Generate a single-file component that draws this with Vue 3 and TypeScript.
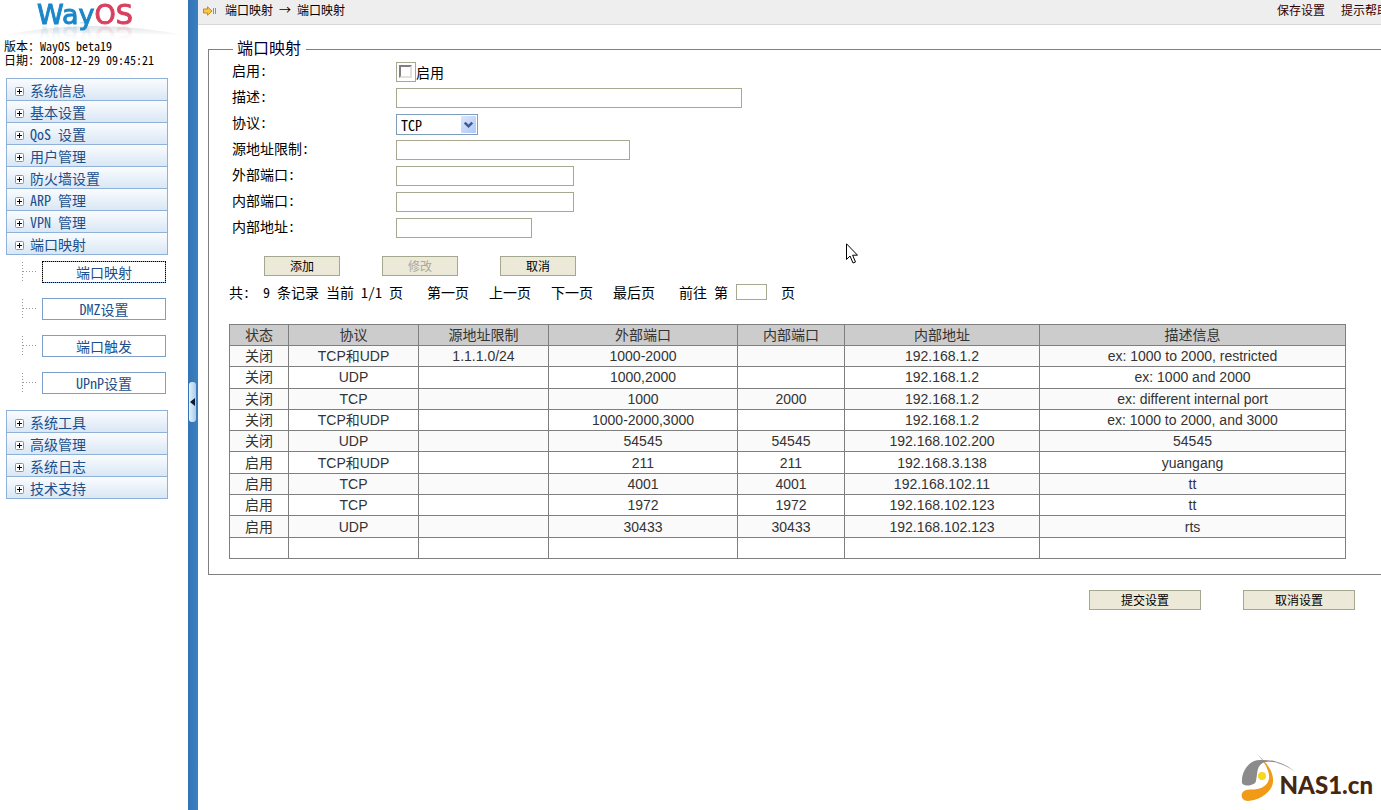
<script setup lang="ts">
import { reactive, ref } from 'vue'

interface Rule {
  state: string
  proto: string
  source: string
  outer: string
  inner: string
  address: string
  note: string
}

const upperMenu = ['系统信息', '基本设置', 'QoS 设置', '用户管理', '防火墙设置', 'ARP 管理', 'VPN 管理', '端口映射']
const subMenu = ['端口映射', 'DMZ设置', '端口触发', 'UPnP设置']
const lowerMenu = ['系统工具', '高级管理', '系统日志', '技术支持']
const activeSub = ref('端口映射')

const form = reactive({ enabled: false, note: '', proto: 'TCP', source: '', outer: '', inner: '', address: '' })
const gotoPage = ref('')

const columns = ['状态', '协议', '源地址限制', '外部端口', '内部端口', '内部地址', '描述信息']
const rules: Rule[] = [
  { state: '关闭', proto: 'TCP和UDP', source: '1.1.1.0/24', outer: '1000-2000', inner: '', address: '192.168.1.2', note: 'ex: 1000 to 2000, restricted' },
  { state: '关闭', proto: 'UDP', source: '', outer: '1000,2000', inner: '', address: '192.168.1.2', note: 'ex: 1000 and 2000' },
  { state: '关闭', proto: 'TCP', source: '', outer: '1000', inner: '2000', address: '192.168.1.2', note: 'ex: different internal port' },
  { state: '关闭', proto: 'TCP和UDP', source: '', outer: '1000-2000,3000', inner: '', address: '192.168.1.2', note: 'ex: 1000 to 2000, and 3000' },
  { state: '关闭', proto: 'UDP', source: '', outer: '54545', inner: '54545', address: '192.168.102.200', note: '54545' },
  { state: '启用', proto: 'TCP和UDP', source: '', outer: '211', inner: '211', address: '192.168.3.138', note: 'yuangang' },
  { state: '启用', proto: 'TCP', source: '', outer: '4001', inner: '4001', address: '192.168.102.11', note: 'tt' },
  { state: '启用', proto: 'TCP', source: '', outer: '1972', inner: '1972', address: '192.168.102.123', note: 'tt' },
  { state: '启用', proto: 'UDP', source: '', outer: '30433', inner: '30433', address: '192.168.102.123', note: 'rts' },
  { state: '', proto: '', source: '', outer: '', inner: '', address: '', note: '' },
]
</script>

<template>
  <div class="shell">
    <aside class="sidebar">
      <div class="brand">
        <svg class="glow" viewBox="0 0 188 14" preserveAspectRatio="none" aria-hidden="true">
          <defs>
            <linearGradient id="glow-fill" x1="0" y1="0" x2="0" y2="1">
              <stop offset="0" stop-color="#e2e4e6" />
              <stop offset="1" stop-color="#ffffff" />
            </linearGradient>
          </defs>
          <path d="M0 11Q94 -9 188 11Q94 5 0 11Z" fill="url(#glow-fill)" />
        </svg>
        <div class="logo"><span class="logo-way">Way</span><span class="logo-os">OS</span></div>
      </div>
      <div class="version">
        <div>版本：WayOS beta19</div>
        <div>日期：2008-12-29 09:45:21</div>
      </div>

      <nav class="menu">
        <a v-for="item in upperMenu" :key="item" class="menu-item" href="#">
          <svg class="plus" viewBox="0 0 9 9" aria-hidden="true">
            <rect x="0.5" y="0.5" width="8" height="8" rx="1" fill="#fff" stroke="#8494a8" />
            <path d="M2 4.5H7M4.5 2V7" stroke="#000" />
          </svg>
          <span>{{ item }}</span>
        </a>
      </nav>

      <nav class="submenu">
        <div v-for="item in subMenu" :key="item" class="sub-row">
          <svg class="branch" viewBox="0 0 16 22" aria-hidden="true">
            <path d="M0.5 1V21M1 10.5H14" fill="none" stroke="#999" stroke-dasharray="1 2" />
          </svg>
          <button type="button" class="sub-button" :class="{ active: item === activeSub }" @click="activeSub = item">{{ item }}</button>
        </div>
      </nav>

      <nav class="menu">
        <a v-for="item in lowerMenu" :key="item" class="menu-item" href="#">
          <svg class="plus" viewBox="0 0 9 9" aria-hidden="true">
            <rect x="0.5" y="0.5" width="8" height="8" rx="1" fill="#fff" stroke="#8494a8" />
            <path d="M2 4.5H7M4.5 2V7" stroke="#000" />
          </svg>
          <span>{{ item }}</span>
        </a>
      </nav>
    </aside>

    <div class="divider">
      <button type="button" class="handle" aria-label="收起菜单">
        <svg viewBox="0 0 5 8" width="5" height="8" aria-hidden="true"><path d="M5 0V8L0 4Z" fill="#0b1a33" /></svg>
      </button>
    </div>

    <main class="main">
      <div class="canvas">
        <header class="topbar">
          <svg class="crumb-icon" viewBox="0 0 14 10" aria-hidden="true">
            <path d="M0.5 3H4.5V0.8L9 5L4.5 9.2V7H0.5Z" fill="#f7c64a" stroke="#c98a12" />
            <path d="M10.5 2V8M12.5 2V8" stroke="#c98a12" />
          </svg>
          <span>端口映射 → 端口映射</span>
          <a class="top-link first" href="#">保存设置</a>
          <a class="top-link" href="#">提示帮助</a>
        </header>

        <fieldset class="panel">
          <legend>端口映射</legend>

          <div class="row">
            <label for="enabled">启用:</label>
            <span class="check-box"><input id="enabled" v-model="form.enabled" type="checkbox" /></span>
            <label class="check-text" for="enabled">启用</label>
          </div>
          <div class="row">
            <label for="note">描述:</label>
            <input id="note" v-model="form.note" class="box w-note" type="text" />
          </div>
          <div class="row">
            <label for="proto">协议:</label>
            <span class="select-wrap">
              <select id="proto" v-model="form.proto">
                <option>TCP</option>
                <option>UDP</option>
                <option>TCP和UDP</option>
              </select>
              <svg class="select-arrow" viewBox="0 0 16 18" aria-hidden="true">
                <defs>
                  <linearGradient id="arrow-fill" x1="0" y1="0" x2="1" y2="1">
                    <stop offset="0" stop-color="#dbe6fd" />
                    <stop offset="1" stop-color="#aec8f7" />
                  </linearGradient>
                </defs>
                <rect x="0" y="0" width="16" height="18" rx="1" fill="url(#arrow-fill)" />
                <path d="M4 7L8 11L12 7" fill="none" stroke="#3e5a90" stroke-width="2.6" />
              </svg>
            </span>
          </div>
          <div class="row">
            <label for="source">源地址限制:</label>
            <input id="source" v-model="form.source" class="box w-source" type="text" />
          </div>
          <div class="row">
            <label for="outer">外部端口:</label>
            <input id="outer" v-model="form.outer" class="box w-port" type="text" />
          </div>
          <div class="row">
            <label for="inner">内部端口:</label>
            <input id="inner" v-model="form.inner" class="box w-port" type="text" />
          </div>
          <div class="row">
            <label for="address">内部地址:</label>
            <input id="address" v-model="form.address" class="box w-address" type="text" />
          </div>

          <div class="actions">
            <button type="button" class="btn">添加</button>
            <button type="button" class="btn" disabled>修改</button>
            <button type="button" class="btn">取消</button>
          </div>

          <div class="pager">
            <span class="total">共:</span>
            <span class="records">9 条记录 当前 1/1 页</span>
            <a href="#">第一页</a>
            <a href="#">上一页</a>
            <a href="#">下一页</a>
            <a href="#">最后页</a>
            <label class="goto" for="goto">前往 第</label>
            <input id="goto" v-model="gotoPage" class="goto-box" type="text" />
            <span>页</span>
          </div>

          <table class="rules">
            <colgroup>
              <col class="c-state" />
              <col class="c-proto" />
              <col class="c-proto" />
              <col class="c-outer" />
              <col class="c-inner" />
              <col class="c-address" />
              <col />
            </colgroup>
            <thead>
              <tr>
                <th v-for="name in columns" :key="name" scope="col">{{ name }}</th>
              </tr>
            </thead>
            <tbody>
              <tr v-for="(rule, i) in rules" :key="i">
                <td>{{ rule.state }}</td>
                <td>{{ rule.proto }}</td>
                <td>{{ rule.source }}</td>
                <td>{{ rule.outer }}</td>
                <td>{{ rule.inner }}</td>
                <td>{{ rule.address }}</td>
                <td>{{ rule.note }}</td>
              </tr>
            </tbody>
          </table>
        </fieldset>

        <div class="footer">
          <button type="button" class="btn wide">提交设置</button>
          <button type="button" class="btn wide">取消设置</button>
        </div>
      </div>
    </main>

    <div class="watermark">
      <svg viewBox="0 0 58 50" width="58" height="50" aria-hidden="true">
        <path d="M16 0C26 9 34 18 33 29C32 40 18 48 8 48C1 48 0 41 4 38C8 35 14 38 21 35C28 32 31 26 28 18C26 11 21 5 16 0Z" fill="#f09a16" />
        <path d="M2 30C1 20 8 7 20 7C36 6 47 12 57 20C46 12 36 8 26 9C16 11 18 20 16 28C15 33 3 34 2 30Z" fill="#8b8b8b" />
        <circle cx="22" cy="23" r="4" fill="#f8d81c" />
      </svg>
      <span>NAS1.cn</span>
    </div>

    <svg class="pointer" viewBox="0 0 12 21" aria-hidden="true">
      <path d="M0.5 0.8V16.5L4 13L7 20L9.5 19L6.6 12.2H11.5Z" fill="#fff" stroke="#000" />
    </svg>
  </div>
</template>

<style>
body {
  margin: 0;
  background: #fff;
}
</style>

<style scoped>
.shell {
  position: relative;
  display: flex;
  min-height: 100vh;
  overflow: hidden;
  background: #fff;
  color: #000;
  font-family: "Noto Sans Mono CJK SC", "Noto Sans CJK SC", monospace;
  font-size: 14px;
  line-height: 20px;
}
a {
  color: inherit;
  text-decoration: none;
}
button,
input,
select {
  box-sizing: border-box;
  margin: 0;
  padding: 0;
  border-radius: 0;
  font-family: inherit;
  color: inherit;
}

.sidebar {
  flex: none;
  width: 188px;
}
.brand {
  position: relative;
  height: 39px;
  overflow: hidden;
}
.logo {
  position: relative;
  padding: 1px 0 0 37px;
  font-family: "DejaVu Sans", sans-serif;
  font-size: 27px;
  line-height: 28px;
  -webkit-text-stroke: 1px currentColor;
  -webkit-box-reflect: below -7px linear-gradient(transparent 40%, rgba(0, 0, 0, 0.2));
}
.logo-way {
  color: #1b87c9;
}
.logo-os {
  color: #d9405f;
}
.glow {
  position: absolute;
  left: 0;
  bottom: 0;
  width: 100%;
  height: 14px;
}
.version {
  padding-left: 4px;
  font-size: 12px;
  line-height: 14px;
}
.menu {
  margin: 11px 20px 0 6px;
  border: 1px solid #8fb0d8;
}
.menu-item {
  display: flex;
  align-items: center;
  gap: 6px;
  box-sizing: border-box;
  height: 22px;
  padding-left: 8px;
  border-bottom: 1px solid #8fb0d8;
  background: linear-gradient(#fafcfe, #d9e7f5);
  color: #1c4f8c;
}
.menu-item:last-child {
  height: 21px;
  border-bottom: 0;
}
.plus {
  flex: none;
  width: 9px;
  height: 9px;
  margin-top: 3px;
}
.submenu {
  display: flex;
  flex-direction: column;
  gap: 15px;
  margin: 6px 22px 16px 22px;
}
.submenu + .menu {
  margin-top: 0;
}
.sub-row {
  display: flex;
  gap: 4px;
}
.branch {
  flex: none;
  width: 16px;
  height: 22px;
}
.sub-button {
  flex: 1;
  height: 22px;
  border: 1px solid #7f9fcb;
  background: #fff;
  color: #1c4f8c;
  font-size: 14px;
  line-height: 18px;
}
.sub-button.active {
  outline: 1px dotted #000;
  outline-offset: -1px;
}

.divider {
  display: flex;
  flex: none;
  align-items: center;
  box-sizing: border-box;
  width: 10px;
  padding: 0 1px 6px;
  background: linear-gradient(90deg, #3374b5, #3b80c2);
}
.handle {
  display: flex;
  align-items: center;
  justify-content: center;
  width: 7px;
  height: 40px;
  border: 0;
  border-radius: 3px;
  background: linear-gradient(90deg, #e6f1fb, #a9cbea);
}

.main {
  flex: 1;
  min-width: 0;
  overflow: hidden;
}
.canvas {
  margin-right: -20px;
}
.topbar {
  display: flex;
  align-items: center;
  box-sizing: border-box;
  height: 25px;
  padding: 0 12px 4px 5px;
  border-bottom: 1px solid #d8d8d8;
  background: #eee;
  font-size: 12px;
}
.crumb-icon {
  width: 14px;
  height: 10px;
  margin: 2px 8px 0 0;
}
.top-link {
  margin-left: 16px;
  color: #300;
}
.top-link.first {
  margin-left: auto;
}

.panel {
  min-width: 0;
  margin: 14px 0 0 10px;
  padding: 0 54px 15px 20px;
  border: 1px solid #7f7f7f;
}
.panel legend {
  margin-left: 4px;
  padding: 0 5px 4px 4px;
  color: #003;
  font-size: 16px;
  line-height: 16px;
}
.row {
  display: flex;
  align-items: center;
  height: 26px;
  padding-left: 3px;
}
.row label:first-child {
  width: 164px;
  padding-bottom: 4px;
}
.box {
  height: 20px;
  border: 1px solid #a8a890;
  background: #fff;
}
.w-note {
  width: 346px;
}
.w-source {
  width: 234px;
}
.w-port {
  width: 178px;
}
.w-address {
  width: 136px;
}
.check-box {
  display: flex;
  box-sizing: border-box;
  width: 20px;
  height: 20px;
  padding: 2px;
  border: 1px solid #a8a890;
}
.check-box input {
  width: 13px;
  height: 13px;
  border: 2px solid;
  border-color: #808080 #e4e2d8 #e4e2d8 #808080;
  background: #fff;
  appearance: none;
}
.check-box input:checked {
  background: #404040;
}
.select-wrap {
  position: relative;
  display: flex;
}
.select-wrap select {
  width: 82px;
  height: 21px;
  padding-left: 4px;
  border: 1px solid #7f9db9;
  background: #fff;
  font-size: 14px;
  appearance: none;
}
.select-arrow {
  position: absolute;
  top: 2px;
  right: 2px;
  width: 15px;
  height: 17px;
  pointer-events: none;
}
.actions {
  display: flex;
  gap: 42px;
  margin: 15px 0 0 35px;
}
.btn {
  width: 76px;
  height: 20px;
  border: 1px solid #a4a88e;
  background: #ece9d8;
  font-size: 12px;
  line-height: 16px;
}
.btn:disabled {
  color: #aca899;
}
.btn.wide {
  width: 112px;
}
.pager {
  display: flex;
  align-items: center;
  height: 22px;
  margin-top: 5px;
}
.pager .total {
  width: 34px;
}
.pager .records {
  margin-right: 24px;
}
.pager a {
  margin-right: 20px;
}
.pager .goto {
  margin: 0 8px 0 4px;
}
.goto-box {
  width: 31px;
  height: 16px;
  margin-right: 14px;
  border: 1px solid #a8a890;
}

.rules {
  width: 100%;
  height: 235px;
  margin-top: 21px;
  border-collapse: collapse;
  table-layout: fixed;
  color: #333;
  font-family: "Liberation Sans", "Noto Sans CJK SC", sans-serif;
  font-size: 14px;
  line-height: 18px;
}
.rules th,
.rules td {
  height: 20px;
  padding: 0;
  border: 1px solid #7f7f7f;
  font-weight: normal;
  text-align: center;
}
.rules th {
  background: #ccc;
}
.rules tbody tr:nth-child(odd) {
  background: #fafafa;
}
.c-state {
  width: 59px;
}
.c-proto {
  width: 130px;
}
.c-outer {
  width: 189px;
}
.c-inner {
  width: 107px;
}
.c-address {
  width: 195px;
}
.footer {
  display: flex;
  justify-content: flex-end;
  gap: 42px;
  padding: 15px 46px 0 0;
}

.watermark {
  position: absolute;
  right: 8px;
  bottom: 7px;
  display: flex;
  align-items: flex-end;
  color: #46260f;
  font-family: Lato, "Open Sans", sans-serif;
  font-size: 24px;
  font-weight: 900;
  line-height: 36px;
}
.watermark svg {
  margin-right: -18px;
}
.pointer {
  position: absolute;
  top: 243px;
  left: 846px;
  width: 12px;
  height: 21px;
}
</style>
